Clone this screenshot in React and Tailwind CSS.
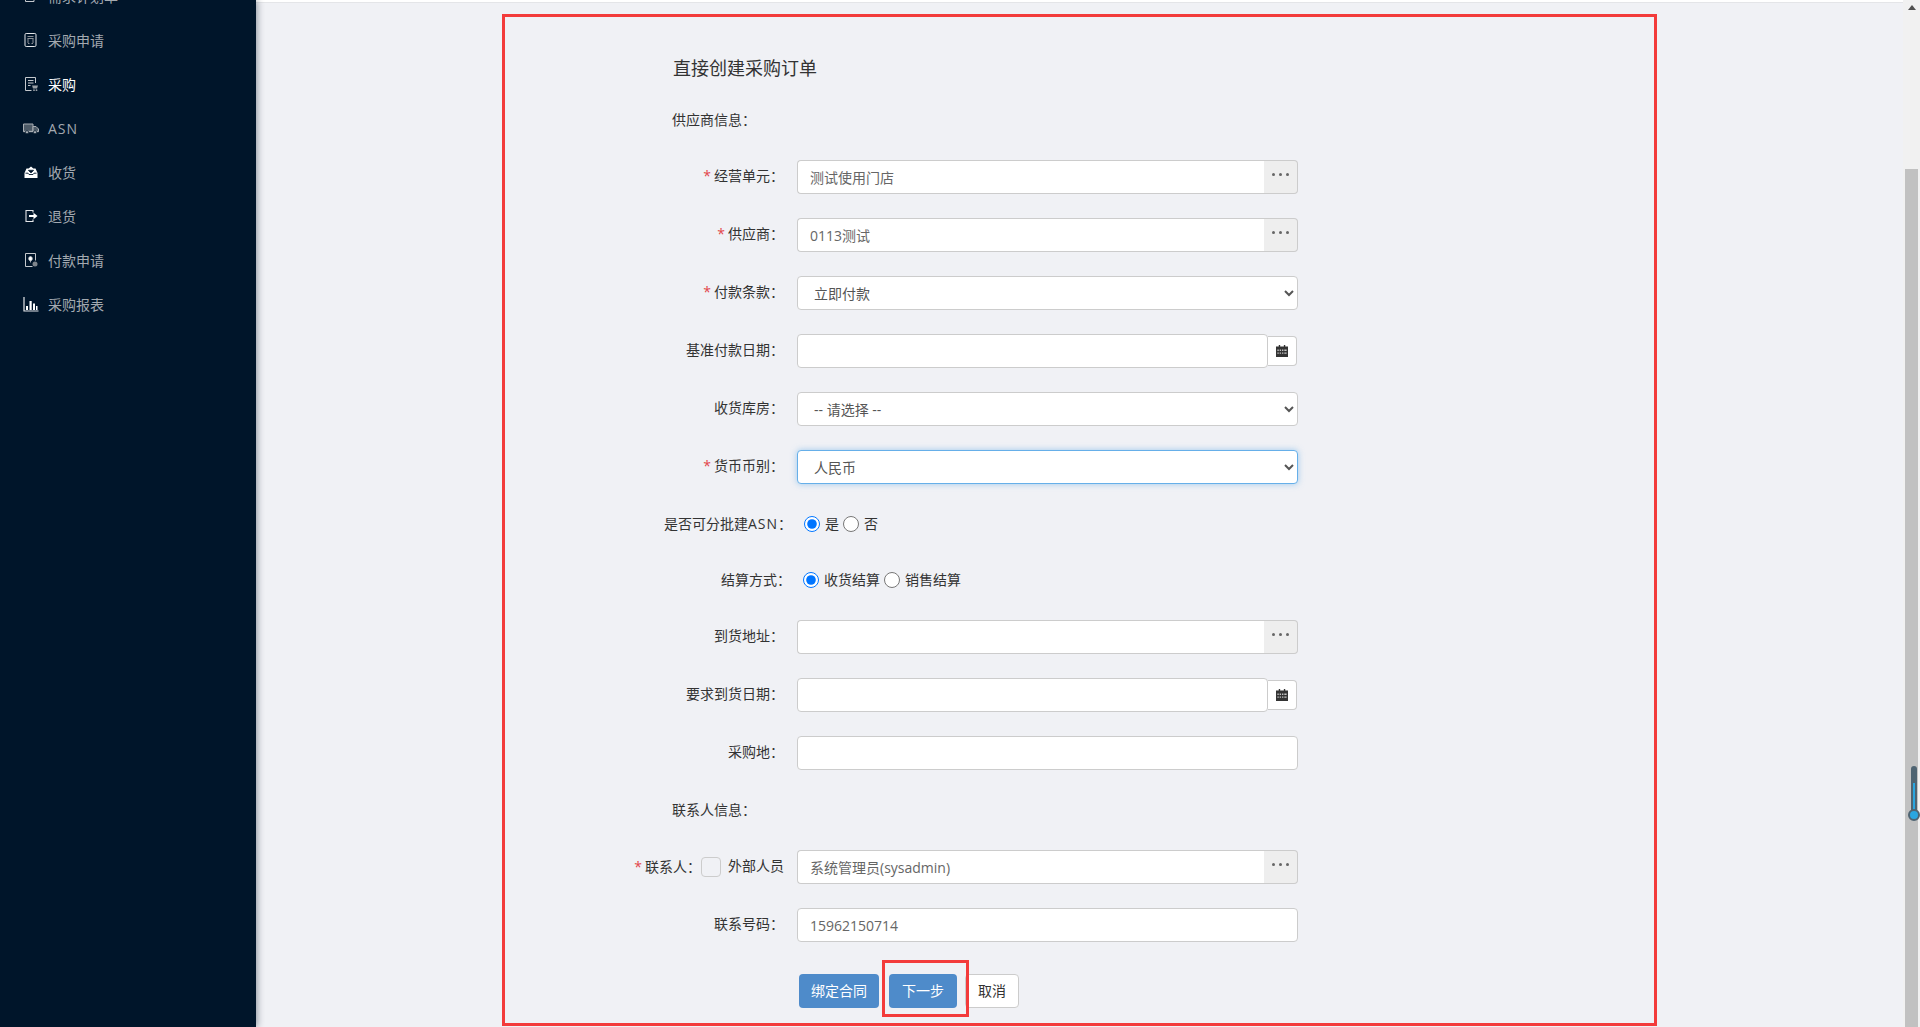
import React from "react";

const font = { fontFamily: '"Open Sans", "Noto Sans CJK SC", sans-serif' };

const Ico = ({ children, cls = "text-[#c4c8cd]" }) => (
  <svg width="16" height="16" viewBox="0 0 16 16" className={`shrink-0 ${cls}`} fill="none" stroke="currentColor" strokeWidth="1">
    {children}
  </svg>
);

const navItems = [
  ["需求计划单", <Ico key="a"><path d="M11 9v4.500H2.500V4.500H9" /><path d="M7 10l6-6-1-1-6 6z" fill="currentColor" /></Ico>],
  ["采购申请", <Ico key="b" cls="text-[#e4e6e9]"><rect x="2" y="1.500" width="11" height="13" rx="1.200" /><path d="M4.500 4.500h6M4.500 6.500h6M5 6.500V11M10 6.500V11M5 11.500h1.500M8.500 11.500H10" stroke="#8a9097" /></Ico>],
  ["采购", <Ico key="c"><path d="M12.500 7V1.500h-10v13h6" /><path d="M5 4.500h5.500M5 7h5.500M5 9.500h2.500" /><path d="M9 9.500h6l-1 3h-4z" fill="#9aa0a6" stroke="none" /><circle cx="11" cy="14.200" r=".9" fill="#9aa0a6" stroke="none" /><circle cx="13.500" cy="14.200" r=".9" fill="#9aa0a6" stroke="none" /></Ico>],
  ["ASN", <Ico key="d" cls="text-[#a8adb3]"><path d="M.5 4h9.500v7.500H.5z" fill="#4d5a67" /><path d="M10 6.500h3l2.500 2.500v2.500H10z" fill="#4d5a67" /><path d="M.5 11.500h15" strokeWidth="1.400" /><circle cx="4" cy="12.200" r="1.600" fill="currentColor" stroke="#00152a" strokeWidth=".7" /><circle cx="12" cy="12.200" r="1.600" fill="currentColor" stroke="#00152a" strokeWidth=".7" /></Ico>],
  ["收货", <Ico key="e"><path d="M1.500 9l2-4.500h2.200L8 2.500l2.300 2h2.200l2 4.500v5h-13z" fill="#fff" stroke="none" /><path d="M5.500 6.300L8 8.800l2.500-2.500zM2.500 9.200H5l1 1.300h4l1-1.300h2.500" stroke="#00152a" fill="none" strokeWidth=".9" /><path d="M5.500 6.500L8 9l2.500-2.500z" fill="#00152a" stroke="none" /></Ico>],
  ["退货", <Ico key="f" cls="text-[#e4e6e9]"><path d="M10 4.500V2.500H3v11h7v-2" strokeWidth="1.100" /><path d="M6 7h4.500V4.800L14.500 8l-4 3.200V9H6z" fill="#fff" stroke="none" /></Ico>],
  ["付款申请", <Ico key="g"><path d="M9.500 14.500h-7v-13h10v7" /><path d="M7.500 4.500a1.800 2.200 0 1 0 .01 0M7.500 9v1.500" fill="#fff" strokeWidth=".8" /><circle cx="12" cy="12" r="2.500" fill="#7e858c" stroke="none" /></Ico>],
  ["采购报表", <Ico key="h" cls="text-[#e4e6e9]"><path d="M1 1v14h14.500" strokeWidth="1.200" /><path d="M3 10h2v4H3zM6.500 5h2.200v9H6.500zM10 7.500h2v6.500h-2zM13 10h1.500v4H13z" fill="#fff" stroke="none" /></Ico>],
];

function Sidebar() {
  return (
    <aside className="w-[256px] shrink-0 bg-[#00152a] shadow-[1px_0_7px_rgba(0,21,41,0.45)] overflow-hidden z-10">
      <nav className="-mt-[26px] flex flex-col">
        {navItems.map(([t, icon]) => (
          <div key={t} className={`h-[44px] flex items-center pl-[23px] gap-[9px] text-[14px] ${t === "采购" ? "text-white" : "text-[#a3a9b0]"}`}>
            {icon}
            <span className={t === "ASN" ? "tracking-[1px]" : ""}>{t}</span>
          </div>
        ))}
      </nav>
    </aside>
  );
}

const Label = ({ text, req }) => (
  <label className="w-[120px] shrink-0 text-right text-[14px] text-[#333] mr-[13px] -mt-[4px] whitespace-nowrap">
    {req && <span className="text-[#e2454a] mr-[3px]">*</span>}
    {text}：
  </label>
);

const Row = ({ children, cls = "h-[34px]" }) => <div className={`flex items-center mb-6 ${cls}`}>{children}</div>;

const inputCls = "h-[34px] bg-white border border-[#ccc] px-3 text-[14px] text-[#666] outline-none";

const PickInput = ({ value = "" }) => (
  <div className="flex w-[501px] h-[34px]">
    <input readOnly value={value} className={`${inputCls} flex-1 min-w-0 rounded-l border-r-0`} style={font} />
    <span className="w-[34px] h-[34px] bg-[#eee] border border-[#ccc] border-l-0 rounded-r flex items-center justify-center gap-[4px] pb-[6px]">
      <i className="w-[3px] h-[3px] rounded-full bg-[#666]" />
      <i className="w-[3px] h-[3px] rounded-full bg-[#666]" />
      <i className="w-[3px] h-[3px] rounded-full bg-[#666]" />
    </span>
  </div>
);

const Cal = () => (
  <svg width="12" height="12" viewBox="0 0 13 13" fill="#333">
    <path d="M3 0h1.500v1.500H8.500V0H10v1.500h3V13H0V1.500h3z" />
    <path d="M1.500 5h1.500v1.500H1.500zM4 5h1.500v1.500H4zM6.500 5H8v1.500H6.500zM9 5h2.500v1.500H9zM1.500 8h1.500v1.500H1.500zM4 8h1.500v1.500H4zM6.500 8H8v1.500H6.500zM9 8h2.500v1.500H9z" fill="#fff" fillOpacity=".7" />
  </svg>
);

const DateInput = () => (
  <div className="flex items-center w-[501px]">
    <input readOnly className={`${inputCls} w-[471px] rounded`} />
    <span className="w-[29px] h-[30px] bg-white border border-[#ccc] border-l-0 rounded-r flex items-center justify-center">
      <Cal />
    </span>
  </div>
);

const Select = ({ value, focus }) => (
  <select
    defaultValue={value}
    className={`h-[34px] w-[501px] bg-white border rounded pl-3 pr-[2px] text-[14px] text-[#555] outline-none ${focus ? "border-[#66afe9] shadow-[0_0_6px_rgba(102,175,233,0.6)]" : "border-[#ccc]"}`}
    style={font}
  >
    <option>{value}</option>
  </select>
);

const Radio = ({ on, name }) => (
  <input type="radio" name={name} defaultChecked={on} className="w-4 h-4 m-0 shrink-0" />
);

const Btn = ({ children, primary }) => (
  <button className={`h-[34px] rounded text-[14px] pb-[2px] ${primary ? "bg-[#4e8bca] text-white px-3" : "bg-white text-[#333] border border-[#ccc] px-3"}`} style={font}>
    {children}
  </button>
);

function Form() {
  return (
    <div className="ml-[408px] w-[640px] pt-[47px]">
      <h1 className="h-[36px] leading-[36px] text-[18px] text-[#333] pl-[9px] mb-[18px]">直接创建采购订单</h1>
      <div className="h-8 mb-6 flex items-center pl-[8px] pb-[2px] text-[14px] text-[#333]">供应商信息：</div>
      <Row><Label text="经营单元" req /><PickInput value="测试使用门店" /></Row>
      <Row><Label text="供应商" req /><PickInput value="0113测试" /></Row>
      <Row><Label text="付款条款" req /><Select value="立即付款" /></Row>
      <Row><Label text="基准付款日期" /><DateInput /></Row>
      <Row><Label text="收货库房" /><Select value="-- 请选择 --" /></Row>
      <Row><Label text="货币币别" req /><Select value="人民币" focus /></Row>
      <Row cls="h-8">
        <span className="w-[128px] shrink-0 text-right text-[14px] text-[#333] whitespace-nowrap -mt-[2px]">是否可分批建<span className="tracking-[1px]">ASN</span>：</span>
        <span className="flex items-center ml-[12px] text-[14px] text-[#333]">
          <Radio on name="asn" /><span className="ml-[5px] mr-[4px] -mt-[1px]">是</span><Radio name="asn" /><span className="ml-[5px] -mt-[1px]">否</span>
        </span>
      </Row>
      <Row cls="h-8">
        <span className="w-[127px] shrink-0 text-right text-[14px] text-[#333] whitespace-nowrap -mt-[2px]">结算方式：</span>
        <span className="flex items-center ml-[12px] text-[14px] text-[#333]">
          <Radio on name="js" /><span className="ml-[5px] mr-[4px] -mt-[1px]">收货结算</span><Radio name="js" /><span className="ml-[5px] -mt-[1px]">销售结算</span>
        </span>
      </Row>
      <Row><Label text="到货地址" /><PickInput /></Row>
      <Row><Label text="要求到货日期" /><DateInput /></Row>
      <Row><Label text="采购地" /><input readOnly className={`${inputCls} w-[501px] rounded`} /></Row>
      <div className="h-8 mb-6 flex items-center pl-[8px] pb-[2px] text-[14px] text-[#333]">联系人信息：</div>
      <Row>
        <span className="w-[120px] shrink-0 mr-[13px] flex items-center justify-end text-[14px] text-[#333] whitespace-nowrap">
          <span className="shrink-0 text-[#e2454a] mr-[3px] -mt-[2px]">*</span>
          <span className="shrink-0 -mt-[2px]">联系人：</span>
          <input type="checkbox" className="shrink-0 appearance-none w-5 h-5 m-0 mr-[7px] border border-[#ccc] rounded bg-[#f0f1f5]" />
          <span className="shrink-0 -mt-[4px]">外部人员</span>
        </span>
        <PickInput value="系统管理员(sysadmin)" />
      </Row>
      <Row><Label text="联系号码" /><input readOnly value="15962150714" className={`${inputCls} w-[501px] rounded`} style={font} /></Row>
      <div className="flex gap-2 ml-[135px] mt-8">
        <span className="w-[82px] flex"><Btn primary><span className="whitespace-nowrap">绑定合同</span></Btn></span>
        <Btn primary><span className="px-[1px] whitespace-nowrap">下一步</span></Btn>
        <Btn>取消</Btn>
      </div>
    </div>
  );
}

function Scrollbar() {
  return (
    <div className="w-[17px] shrink-0 bg-[#f1f1f1] relative flex flex-col items-center">
      <span className="mt-[5px] w-0 h-0 border-x-[4px] border-x-transparent border-b-[5px] border-b-[#505050]" />
      <span className="absolute left-[2px] top-[169px] bottom-0 w-[13px] bg-[#c1c1c1]" />
      <span className="absolute left-[8px] top-[766px] w-[6px] h-[50px] bg-[#4f6472] rounded-t-[3px]">
        <span className="absolute left-[2px] top-[17px] bottom-0 w-[2px] bg-[#2aa6e0]" />
      </span>
      <span className="absolute left-[5px] top-[809px] w-[12px] h-[12px] rounded-full bg-[#2aa6e0] border-2 border-[#4f6472]" />
    </div>
  );
}

export default function App() {
  return (
    <div className="relative flex h-[1027px] w-[1920px] overflow-hidden bg-[#f0f1f5]" style={font}>
      <Sidebar />
      <main className="flex-1 min-w-0 overflow-hidden">
        <div className="h-[3px] bg-white border-b border-[#e4e5e8]" />
        <Form />
      </main>
      <Scrollbar />
      <div className="absolute left-[502px] top-[14px] w-[1155px] h-[1012px] border-[3px] border-[#f33b3b] pointer-events-none" />
      <div className="absolute left-[882px] top-[960px] w-[87px] h-[57px] border-[3px] border-[#f33b3b] pointer-events-none" />
    </div>
  );
}
